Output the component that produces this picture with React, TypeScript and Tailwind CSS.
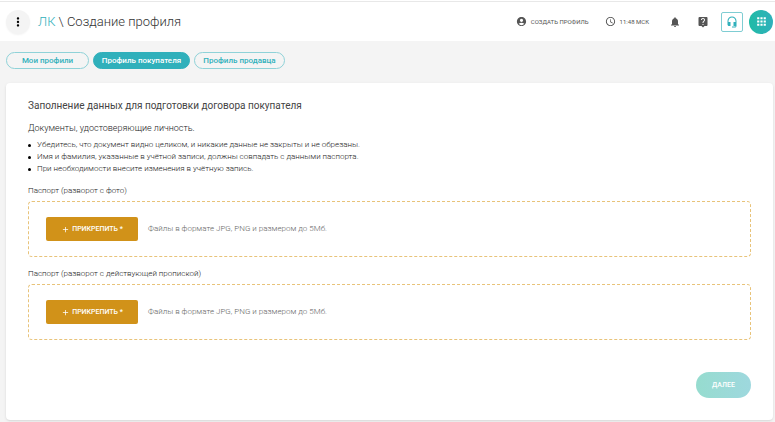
import {
  MdAccessTime,
  MdAccountCircle,
  MdAdd,
  MdApps,
  MdHeadsetMic,
  MdLiveHelp,
  MdMoreVert,
  MdNotifications,
} from 'react-icons/md';

const tabs = [
  { id: 'list', title: 'Мои профили', width: 'w-[83px]' },
  { id: 'buyer', title: 'Профиль покупателя', width: 'w-[97px]' },
  { id: 'seller', title: 'Профиль продавца', width: 'w-[91px]' },
];

const rules = [
  'Убедитесь, что документ видно целиком, и никакие данные не закрыты и не обрезаны.',
  'Имя и фамилия, указанные в учётной записи, должны совпадать с данными паспорта.',
  'При необходимости внесите изменения в учётную запись.',
];

const uploads = [
  { id: 'photo', title: 'Паспорт (разворот с фото)' },
  { id: 'address', title: 'Паспорт (разворот с действующей пропиской)' },
];

function Header() {
  return (
    <header className="flex h-10 items-center justify-between border-t border-[#e8e8e8] bg-white pr-0.5 pl-1.5">
      <div className="flex items-center gap-2">
        <button
          aria-label="Меню"
          className="flex size-6 items-center justify-center rounded-full bg-[#f4f4f4] shadow-xs"
        >
          <MdMoreVert size={14} className="text-black" />
        </button>
        <h1 className="text-[13px] leading-5 font-light text-[#333]">
          <a href="#" className="text-[#30b0bb]">ЛК</a> \ Создание профиля
        </h1>
      </div>

      <div className="flex items-center text-[6px] text-[#555]">
        <a href="#" className="flex items-center gap-1">
          <MdAccountCircle size={11} />
          СОЗДАТЬ ПРОФИЛЬ
        </a>
        <div className="ml-4 flex items-center gap-1">
          <MdAccessTime size={11} />
          11:48 МСК
        </div>
        <button aria-label="Уведомления" className="ml-5">
          <MdNotifications size={12} />
        </button>
        <button aria-label="Помощь" className="ml-4">
          <MdLiveHelp size={12} />
        </button>
        <button
          aria-label="Поддержка"
          className="ml-3 flex h-5 w-[22px] items-center justify-center rounded-xs border border-[#7fcdd3] text-[#30b0bb]"
        >
          <MdHeadsetMic size={12} />
        </button>
        <button
          aria-label="Приложения"
          className="ml-1.5 flex size-6 items-center justify-center rounded-full bg-linear-to-r from-[#1fbba6] to-[#30b0bb] text-white"
        >
          <MdApps size={13} />
        </button>
      </div>
    </header>
  );
}

function UploadField({ id, title }: { id: string; title: string }) {
  return (
    <section aria-labelledby={id}>
      <h3 id={id} className="text-[8px] leading-3 font-light text-[#222]">{title}</h3>
      <div className="mt-1 flex h-14 items-center gap-2.5 rounded-sm border border-dashed border-[#e8c37a] px-[17px]">
        <button className="flex h-6 w-[92px] items-center justify-center gap-0.5 rounded-xs bg-[#d19219] text-[7px] font-medium text-white">
          <MdAdd size={9} />
          ПРИКРЕПИТЬ *
        </button>
        <span className="text-[8px] font-light text-[#666]">Файлы в формате JPG, PNG и размером до 5Мб.</span>
      </div>
    </section>
  );
}

export default function App() {
  return (
    <div className="min-h-screen bg-[#f4f4f4] font-[Roboto,sans-serif]">
      <div className="bg-white pt-px">
        <Header />
      </div>

      <nav className="flex gap-1 px-1.5 pt-[11px]">
        {tabs.map(tab => (
          <button
            key={tab.id}
            className={`h-[17px] rounded-full border text-[8px] leading-3 font-medium ${tab.width} ${
              tab.id === 'buyer'
                ? 'border-[#30b0bb] bg-[#30b0bb] text-white'
                : 'border-[#8fd2d8] text-[#30b0bb]'
            }`}
          >
            {tab.title}
          </button>
        ))}
      </nav>

      <main className="mt-3.5 mr-0.5 ml-1.5 rounded-sm bg-white px-[22px] pt-4 pb-[22px] shadow-sm">
        <h2 className="text-[10px] leading-3.5 text-[#444]">
          Заполнение данных для подготовки договора покупателя
        </h2>
        <p className="mt-2 text-[9px] leading-3.5 font-light text-[#222]">Документы, удостоверяющие личность.</p>
        <ul className="mt-1 text-[8px] leading-3 font-light text-[#222]">
          {rules.map(rule => (
            <li
              key={rule}
              className="flex items-center gap-1.5 before:size-[3px] before:rounded-full before:bg-black"
            >
              {rule}
            </li>
          ))}
        </ul>

        <div className="mt-2.5 space-y-[11px]">
          {uploads.map(upload => (
            <UploadField key={upload.id} id={upload.id} title={upload.title} />
          ))}
        </div>

        <div className="mt-8 flex justify-end">
          <button
            disabled
            className="h-[26px] w-[55px] rounded-full bg-linear-to-r from-[#96dccf] to-[#9ed8de] text-[7px] font-medium text-white"
          >
            ДАЛЕЕ
          </button>
        </div>
      </main>
    </div>
  );
}
